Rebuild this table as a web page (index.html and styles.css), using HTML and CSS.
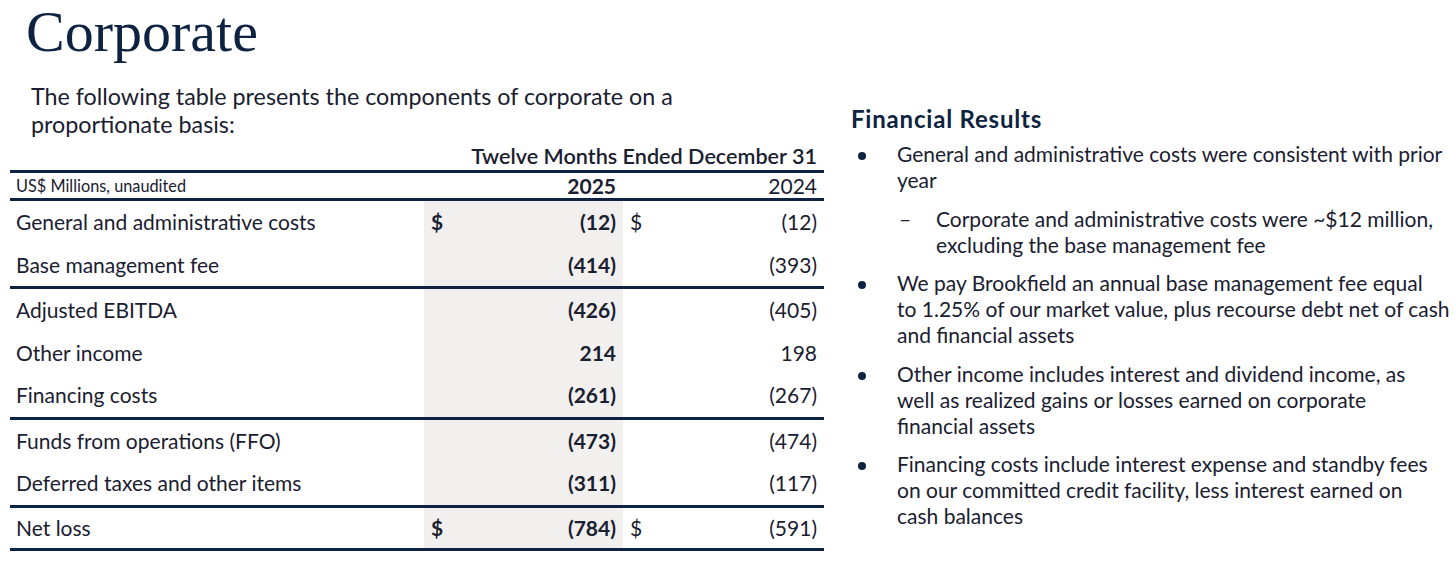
FILE: index.html
```html
<!DOCTYPE html>
<html lang="en">
<head>
<meta charset="utf-8">
<title>Corporate</title>
<link rel="stylesheet" href="styles.css">
</head>
<body>
<h1 class="title">Corporate</h1>
<div class="content">
  <section class="left">
    <p class="intro">The following table presents the components of corporate on a<br>proportionate basis:</p>
    <table class="fin">
      <colgroup><col class="c-label"><col class="c-cur"><col class="c-prior"></colgroup>
      <thead>
        <tr class="period"><th></th><th colspan="2" class="period-label">Twelve Months Ended December 31</th></tr>
        <tr class="years"><th class="units">US$ Millions, unaudited</th><th class="y-cur">2025</th><th class="y-prior">2024</th></tr>
      </thead>
      <tbody>
        <tr><td class="label">General and administrative costs</td><td class="cur"><span class="sym">$</span><span>(12)</span></td><td class="prior"><span class="sym">$</span><span>(12)</span></td></tr>
        <tr class="sep"><td class="label">Base management fee</td><td class="cur"><span></span><span>(414)</span></td><td class="prior"><span></span><span>(393)</span></td></tr>
        <tr><td class="label">Adjusted EBITDA</td><td class="cur"><span></span><span>(426)</span></td><td class="prior"><span></span><span>(405)</span></td></tr>
        <tr><td class="label">Other income</td><td class="cur"><span></span><span>214</span></td><td class="prior"><span></span><span>198</span></td></tr>
        <tr class="sep"><td class="label">Financing costs</td><td class="cur"><span></span><span>(261)</span></td><td class="prior"><span></span><span>(267)</span></td></tr>
        <tr><td class="label">Funds from operations (FFO)</td><td class="cur"><span></span><span>(473)</span></td><td class="prior"><span></span><span>(474)</span></td></tr>
        <tr class="sep"><td class="label">Deferred taxes and other items</td><td class="cur"><span></span><span>(311)</span></td><td class="prior"><span></span><span>(117)</span></td></tr>
        <tr class="sep total"><td class="label">Net loss</td><td class="cur"><span class="sym">$</span><span>(784)</span></td><td class="prior"><span class="sym">$</span><span>(591)</span></td></tr>
      </tbody>
    </table>
  </section>
  <section class="right">
    <h2 class="heading">Financial Results</h2>
    <ul class="bullets">
      <li class="item">
        <div class="item-body">General and administrative costs were consistent with prior<br>year
          <ul class="subs">
            <li class="sub">Corporate and administrative costs were ~$12 million,<br>excluding the base management fee</li>
          </ul>
        </div>
      </li>
      <li class="item"><div class="item-body">We pay Brookfield an annual base management fee equal<br>to 1.25% of our market value, plus recourse debt net of cash<br>and financial assets</div></li>
      <li class="item"><div class="item-body">Other income includes interest and dividend income, as<br>well as realized gains or losses earned on corporate<br>financial assets</div></li>
      <li class="item"><div class="item-body">Financing costs include interest expense and standby fees<br>on our committed credit facility, less interest earned on<br>cash balances</div></li>
    </ul>
  </section>
</div>
</body>
</html>
```

FILE: styles.css
```css
html, body {
  margin: 0;
  padding: 0;
  background: #ffffff;
}

body {
  font-family: "Lato", "Noto Sans", sans-serif;
  color: #1a2030;
  width: 1456px;
  height: 566px;
  overflow: hidden;
}

.title {
  margin: 0;
  padding-left: 26px;
  font-family: "Liberation Serif", "Times New Roman", serif;
  font-weight: 400;
  font-size: 58px;
  line-height: 64px;
  color: #0e2341;
}

.content {
  display: flex;
  gap: 27px;
}

.left {
  margin-left: 10px;
  width: 814px;
}

.intro {
  margin: 18px 0 0 21px;
  font-size: 23.3px;
  line-height: 28px;
  color: #1a2030;
}

.fin {
  border-collapse: separate;
  border-spacing: 0;
  table-layout: fixed;
  width: 814px;
}

.c-label { width: 414px; }
.c-cur { width: 199px; }
.c-prior { width: 201px; }

.fin th,
.fin td {
  padding: 0;
  font-size: 21px;
  color: #1a2030;
}

.period th {
  height: 24px;
  padding: 6px 7px 2px 0;
  line-height: 24px;
  text-align: right;
  font-weight: 600;
  font-size: 21.6px;
  vertical-align: top;
}

.years th {
  border-top: 3px solid #0e2341;
  border-bottom: 3px solid #0e2341;
  height: 25px;
  padding: 0;
  line-height: 25px;
  vertical-align: middle;
  text-align: right;
  font-weight: 400;
}

.years .units {
  text-align: left;
  padding-left: 6px;
  font-size: 16.3px;
  padding-top: 1px;
  height: 24px;
  line-height: 24px;
}

.years .y-cur {
  font-weight: 700;
  padding-right: 7px;
}

.years .y-prior {
  padding-right: 7px;
}

.fin tbody td {
  height: 42.5px;
  line-height: 24px;
  vertical-align: middle;
}

.fin tbody .total td {
  height: 40px;
}

.fin tbody .sep td {
  border-bottom: 3px solid #0e2341;
}

.fin .label {
  padding-left: 6px;
}

.fin .cur {
  background: #f1f0ee;
  font-weight: 700;
}

.fin .cur,
.fin .prior {
  padding-right: 7px;
  white-space: nowrap;
  text-align: right;
}

.fin .cur span,
.fin .prior span {
  display: inline-block;
}

.fin .cur .sym,
.fin .prior .sym {
  float: left;
  padding-left: 7px;
}

.right {
  width: 605px;
}

.heading {
  margin: 42px 0 0 0;
  font-size: 24px;
  letter-spacing: 0.8px;
  line-height: 26px;
  font-weight: 700;
  color: #0e2341;
}

.bullets {
  list-style: none;
  margin: 9px 0 0 0;
  padding: 0;
}

.item {
  display: flex;
  font-size: 21px;
  line-height: 26px;
  white-space: nowrap;
}

.item + .item {
  margin-top: 12.5px;
}

.item::before {
  content: "";
  flex: 0 0 8px;
  height: 8px;
  border-radius: 50%;
  background: #0e2341;
  margin: 11px 31px 0 7px;
}

.subs {
  list-style: none;
  margin: 12.5px 0 0 0;
  padding: 0;
}

.sub {
  display: flex;
}

.sub::before {
  content: "–";
  flex: 0 0 39px;
  padding-left: 2px;
  box-sizing: border-box;
}
```
